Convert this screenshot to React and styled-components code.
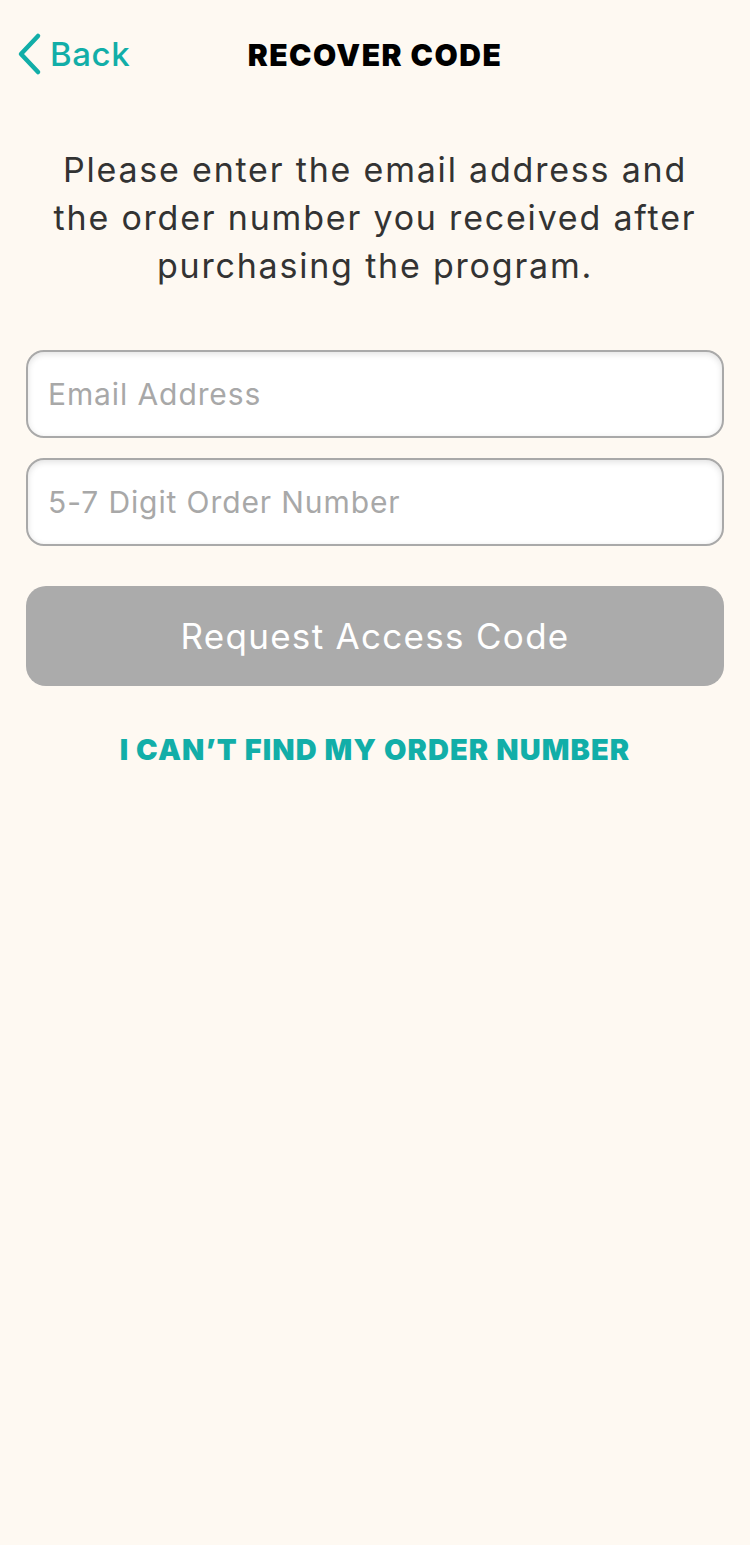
import React from 'react';
import styled, { createGlobalStyle } from 'styled-components';

const GlobalStyle = createGlobalStyle`
  html, body {
    margin: 0;
    padding: 0;
    background: #fef9f2;
  }
  body {
    font-family: Inter, "Open Sans", "Liberation Sans", sans-serif;
  }
`;

const Page = styled.div`
  min-height: 1545px;
  background: #fef9f2;
  box-sizing: border-box;
`;

const Header = styled.header`
  position: relative;
  height: 110px;
  display: flex;
  align-items: center;
  justify-content: center;
`;

const BackButton = styled.button`
  position: absolute;
  left: 16px;
  top: 32px;
  display: flex;
  align-items: center;
  gap: 8px;
  background: none;
  border: none;
  padding: 0;
  color: #12aea8;
  font-family: inherit;
  font-size: 33px;
  font-weight: 500;
  letter-spacing: 0.6px;
  cursor: pointer;
`;

const Title = styled.h1`
  margin: 0;
  font-size: 30px;
  font-weight: 900;
  letter-spacing: 1.5px;
  color: #000;
`;

const Content = styled.main`
  padding: 36px 26px 0;
  display: flex;
  flex-direction: column;
`;

const Intro = styled.p`
  margin: 0 0 60px;
  text-align: center;
  font-size: 34px;
  line-height: 48px;
  letter-spacing: 1.8px;
  color: #333;
  padding: 0 8px;
`;

const Fields = styled.div`
  display: flex;
  flex-direction: column;
  gap: 20px;
`;

const Input = styled.input`
  box-sizing: border-box;
  width: 100%;
  height: 88px;
  padding: 0 20px;
  border: 2px solid #a9a9a9;
  border-radius: 18px;
  background: #fff;
  box-shadow: inset 0 2px 6px rgba(0, 0, 0, 0.12);
  font-family: inherit;
  font-size: 30px;
  letter-spacing: 0.9px;
  color: #333;
  outline: none;

  &::placeholder {
    color: #a8a8a8;
  }
`;

const SubmitButton = styled.button`
  margin-top: 40px;
  height: 100px;
  border: none;
  border-radius: 20px;
  background: #ababab;
  color: #fff;
  font-family: inherit;
  font-size: 35px;
  font-weight: 400;
  letter-spacing: 1.3px;
`;

const HelpLink = styled.a`
  margin-top: 46px;
  text-align: center;
  color: #12aea8;
  font-size: 29px;
  font-weight: 900;
  text-decoration: none;
  letter-spacing: 1.1px;
`;

const ChevronLeft = () => (
  <svg width="26" height="44" viewBox="0 0 26 44" fill="none">
    <path d="M22 4 L5 22 L22 40" stroke="#12aea8" strokeWidth="4.5" strokeLinecap="round" strokeLinejoin="round" />
  </svg>
);

const App = () => (
  <Page>
    <GlobalStyle />
    <Header>
      <BackButton>
        <ChevronLeft />
        Back
      </BackButton>
      <Title>RECOVER CODE</Title>
    </Header>
    <Content>
      <Intro>
        Please enter the email address and the order number you received after purchasing the program.
      </Intro>
      <Fields>
        <Input type="email" placeholder="Email Address" />
        <Input type="text" placeholder="5-7 Digit Order Number" />
      </Fields>
      <SubmitButton disabled>Request Access Code</SubmitButton>
      <HelpLink href="#">I CAN’T FIND MY ORDER NUMBER</HelpLink>
    </Content>
  </Page>
);

export default App;
